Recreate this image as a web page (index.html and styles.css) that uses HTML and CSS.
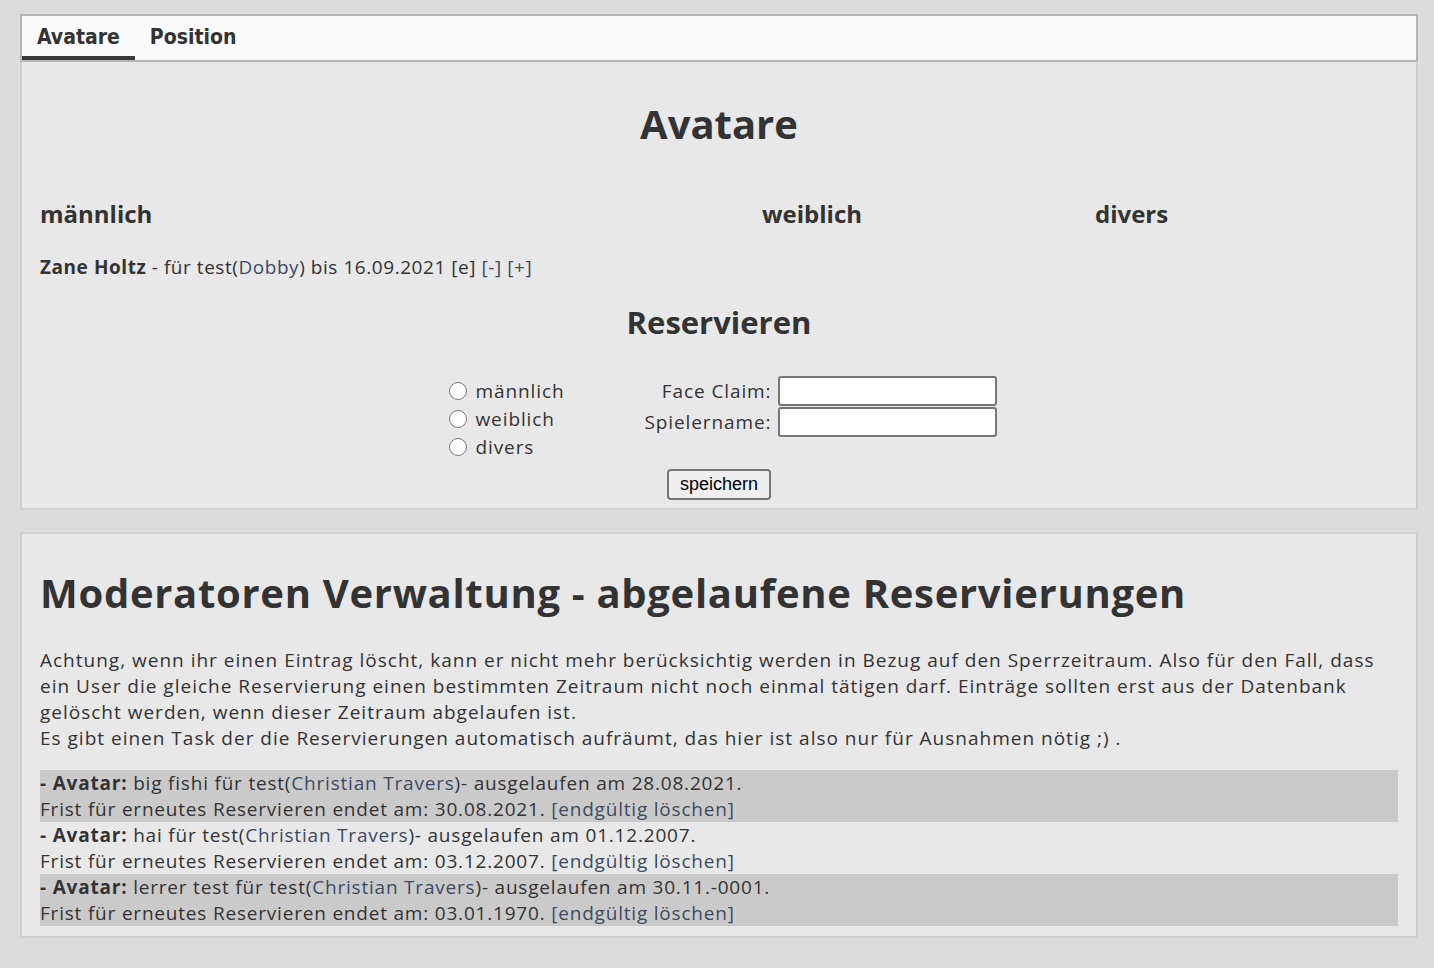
FILE: index.html
```html
<!DOCTYPE html>
<html lang="de">
<head>
<meta charset="utf-8">
<title>Avatare</title>
<link rel="stylesheet" href="styles.css">
</head>
<body>
<div class="box">
  <div class="tabs">
    <a class="tab active">Avatare</a>
    <a class="tab">Position</a>
  </div>
  <div class="panel">
    <h1 class="title">Avatare</h1>
    <div class="cols">
      <div class="col">
        <h3>männlich</h3>
        <div class="entry"><b>Zane Holtz</b> - für test(<a class="link">Dobby</a>) bis 16.09.2021 [e] <a class="link">[-]</a> <a class="link">[+]</a></div>
      </div>
      <div class="col"><h3>weiblich</h3></div>
      <div class="col"><h3>divers</h3></div>
    </div>
    <h2 class="sub">Reservieren</h2>
    <form class="resform">
      <div class="formrow">
        <div class="radios">
          <label class="radio"><input type="radio" name="g"> männlich</label>
          <label class="radio"><input type="radio" name="g"> weiblich</label>
          <label class="radio"><input type="radio" name="g"> divers</label>
        </div>
        <div class="fields">
          <label class="flabel">Face Claim:</label><input class="finput" type="text">
          <label class="flabel">Spielername:</label><input class="finput" type="text">
        </div>
      </div>
      <div class="btnrow"><button type="button" class="btn">speichern</button></div>
    </form>
  </div>
</div>

<div class="box panel2">
  <h1 class="big">Moderatoren Verwaltung - abgelaufene Reservierungen</h1>
  <p class="info">Achtung, wenn ihr einen Eintrag löscht, kann er nicht mehr berücksichtig werden in Bezug auf den Sperrzeitraum. Also für den Fall, dass ein User die gleiche Reservierung einen bestimmten Zeitraum nicht noch einmal tätigen darf. Einträge sollten erst aus der Datenbank gelöscht werden, wenn dieser Zeitraum abgelaufen ist.<br>Es gibt einen Task der die Reservierungen automatisch aufräumt, das hier ist also nur für Ausnahmen nötig ;) .</p>
  <div class="list">
    <div class="item odd"><b>- Avatar:</b> big fishi für test(<a class="link">Christian Travers</a>)- ausgelaufen am 28.08.2021.<br>Frist für erneutes Reservieren endet am: 30.08.2021. <a class="link">[endgültig löschen]</a></div>
    <div class="item"><b>- Avatar:</b> hai für test(<a class="link">Christian Travers</a>)- ausgelaufen am 01.12.2007.<br>Frist für erneutes Reservieren endet am: 03.12.2007. <a class="link">[endgültig löschen]</a></div>
    <div class="item odd"><b>- Avatar:</b> lerrer test für test(<a class="link">Christian Travers</a>)- ausgelaufen am 30.11.-0001.<br>Frist für erneutes Reservieren endet am: 03.01.1970. <a class="link">[endgültig löschen]</a></div>
  </div>
</div>
</body>
</html>
```

FILE: styles.css
```css
html, body {
  margin: 0;
  padding: 0;
}
body {
  background: #dcdcdc;
  color: #333333;
  font-family: "Open Sans", "Noto Sans", sans-serif;
  font-size: 19px;
  letter-spacing: 0.9px;
  padding: 14px 16px 30px 20px;
}
.box {
  width: 1398px;
  box-sizing: border-box;
}
.tabs {
  display: flex;
  background: #fafafa;
  border: 2px solid #b4b4b4;
  height: 48px;
  box-sizing: border-box;
}
.tab {
  display: block;
  font-family: "DejaVu Sans Condensed", "DejaVu Sans", sans-serif;
  font-weight: bold;
  font-size: 21px;
  letter-spacing: 0;
  line-height: 24px;
  color: #333;
  padding: 9px 15px 0 15px;
  height: 44px;
  box-sizing: border-box;
  border-bottom: 4px solid transparent;
}
.tab.active {
  border-bottom-color: #383838;
}
.panel {
  background: #e8e8e8;
  border: 2px solid #cfcfcf;
  border-top: 0;
  padding: 0 18px 8px 18px;
}
.title {
  margin: 0;
  padding-top: 36px;
  text-align: center;
  font-size: 40px;
  letter-spacing: 0;
  line-height: 52px;
  font-weight: 700;
}
.cols {
  display: grid;
  grid-template-columns: 722px 333px 1fr;
  margin-top: 49px;
}
h3 {
  margin: 0;
  font-size: 24px;
  letter-spacing: 0;
  line-height: 30px;
  font-weight: 700;
}
.entry {
  margin-top: 25px;
  line-height: 26px;
  letter-spacing: 0.55px;
}
.link {
  color: #3e4a5f;
  text-decoration: none;
}
.sub {
  margin: 23px 0 0 0;
  text-align: center;
  font-size: 31px;
  letter-spacing: 0;
  line-height: 38px;
  font-weight: 700;
}
.resform {
  margin-top: 35px;
}
.formrow {
  display: flex;
  justify-content: center;
  align-items: flex-start;
  gap: 80px;
  padding-left: 7px;
}
.radios {
  display: flex;
  flex-direction: column;
  padding-top: 1px;
}
.radio {
  display: flex;
  align-items: center;
  gap: 9px;
  line-height: 28px;
}
.radio input {
  margin: 0;
  width: 18px;
  height: 18px;
}
.fields {
  display: grid;
  grid-template-columns: auto 219px;
  column-gap: 6px;
  row-gap: 1px;
  align-items: center;
}
.flabel {
  text-align: right;
}
.finput {
  margin: 0;
  height: 30px;
  box-sizing: border-box;
  border: 2px solid #767676;
  border-radius: 3px;
  background: #fff;
}
.btnrow {
  text-align: center;
  margin-top: 8px;
}
.btn {
  font-family: "Liberation Sans", Arial, sans-serif;
  font-size: 18px;
  letter-spacing: 0;
  height: 31px;
  padding: 0 11px;
  background: #efefef;
  border: 2px solid #767676;
  border-radius: 4px;
  color: #000;
}
.panel2 {
  margin-top: 22px;
  background: #e8e8e8;
  border: 2px solid #cfcfcf;
  padding: 24px 18px 10px 18px;
}
.big {
  margin: 0;
  font-size: 40px;
  letter-spacing: 0.7px;
  line-height: 70px;
  font-weight: 700;
}
.info {
  margin: 19px 0 19px 0;
  line-height: 26px;
  letter-spacing: 1px;
}
.item {
  line-height: 26px;
  letter-spacing: 0.8px;
}
.item.odd {
  background: #cacaca;
}
```
